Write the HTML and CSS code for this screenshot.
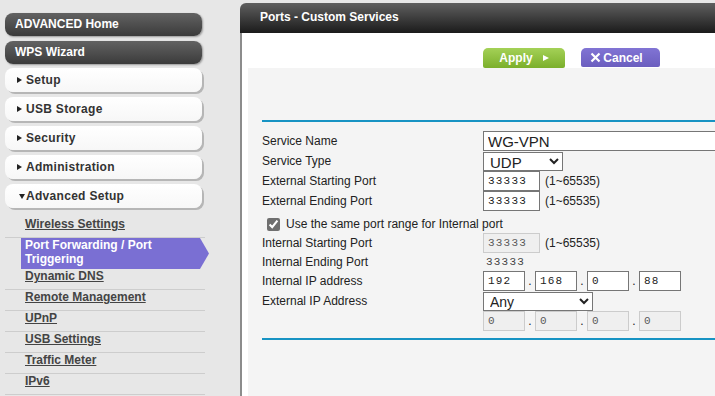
FILE: index.html
```html
<!DOCTYPE html>
<html lang="en">
<head>
    <meta charset="UTF-8">
    <title>Ports - Custom Services</title>
    <link rel="stylesheet" href="styles.css">
</head>
<body>
    <nav class="sidebar">
        <a class="nav-dark" href="#">ADVANCED Home</a>
        <a class="nav-dark" href="#">WPS Wizard</a>
        <a class="nav-btn" href="#"><span class="tri"></span>Setup</a>
        <a class="nav-btn" href="#"><span class="tri"></span>USB Storage</a>
        <a class="nav-btn" href="#"><span class="tri"></span>Security</a>
        <a class="nav-btn" href="#"><span class="tri"></span>Administration</a>
        <a class="nav-btn" href="#"><span class="tri tri-down"></span>Advanced Setup</a>
        <ul class="sub-menu">
            <li><a href="#">Wireless Settings</a></li>
            <li class="active"><a href="#">Port Forwarding / Port Triggering</a></li>
            <li><a href="#">Dynamic DNS</a></li>
            <li><a href="#">Remote Management</a></li>
            <li><a href="#">UPnP</a></li>
            <li><a href="#">USB Settings</a></li>
            <li><a href="#">Traffic Meter</a></li>
            <li><a href="#">IPv6</a></li>
        </ul>
    </nav>

    <main class="main">
        <h1 class="page-title">Ports - Custom Services</h1>
        <div class="page-body">
            <div class="button-bar">
                <button class="btn btn-apply">Apply <span class="play"></span></button>
                <button class="btn btn-cancel">
                    <svg width="11" height="11" viewBox="0 0 11 11"><path d="M1.5 1.5 L9.5 9.5 M9.5 1.5 L1.5 9.5" stroke="#fff" stroke-width="2.2" fill="none"/></svg>Cancel
                </button>
            </div>

            <div class="content">
                <div class="rule"></div>
                <form class="form">
                    <label>Service Name</label>
                    <div class="field"><input class="text-input" type="text" value="WG-VPN"></div>

                    <label>Service Type</label>
                    <div class="field">
                        <select class="select select-type"><option>UDP</option><option>TCP</option><option>TCP/UDP</option></select>
                    </div>

                    <label>External Starting Port</label>
                    <div class="field"><input class="port-input" type="text" value="33333"><span class="hint">(1~65535)</span></div>

                    <label>External Ending Port</label>
                    <div class="field"><input class="port-input" type="text" value="33333"><span class="hint">(1~65535)</span></div>

                    <div class="check-row">
                        <input type="checkbox" checked>
                        <span>Use the same port range for Internal port</span>
                    </div>

                    <label>Internal Starting Port</label>
                    <div class="field"><input class="port-input" type="text" value="33333" disabled><span class="hint">(1~65535)</span></div>

                    <label>Internal Ending Port</label>
                    <div class="field"><span class="port-value">33333</span></div>

                    <label>Internal IP address</label>
                    <div class="field">
                        <input class="ip-input" type="text" value="192"><span class="dot">.</span>
                        <input class="ip-input" type="text" value="168"><span class="dot">.</span>
                        <input class="ip-input" type="text" value="0"><span class="dot">.</span>
                        <input class="ip-input" type="text" value="88">
                    </div>

                    <label>External IP Address</label>
                    <div class="field">
                        <select class="select select-ip"><option>Any</option><option>Single address</option></select>
                    </div>

                    <span></span>
                    <div class="field">
                        <input class="ip-input" type="text" value="0" disabled><span class="dot">.</span>
                        <input class="ip-input" type="text" value="0" disabled><span class="dot">.</span>
                        <input class="ip-input" type="text" value="0" disabled><span class="dot">.</span>
                        <input class="ip-input" type="text" value="0" disabled>
                    </div>
                </form>
                <div class="rule"></div>
            </div>
        </div>
    </main>
</body>
</html>
```

FILE: styles.css
```css
body {
    margin: 0;
    background-color: #e7e7e7;
    font-family: "Liberation Sans", Arial, sans-serif;
    font-size: 12px;
    color: #222;
    display: flex;
    height: 396px;
    overflow: hidden;
}

/* left menu */
.sidebar {
    width: 240px;
    flex: none;
    padding: 13px 0 0 5px;
    box-sizing: border-box;
}

.nav-dark {
    display: block;
    width: 197px;
    height: 23px;
    line-height: 23px;
    margin-bottom: 5px;
    padding-left: 10px;
    box-sizing: border-box;
    border-radius: 8px;
    background: linear-gradient(#626262, #3b3b3b);
    box-shadow: 1px 1px 2px rgba(0, 0, 0, 0.35);
    color: #fff;
    font-weight: bold;
    text-decoration: none;
}

.nav-dark + .nav-btn {
    margin-top: -1px;
}

.nav-btn {
    display: flex;
    align-items: center;
    width: 197px;
    height: 24px;
    margin-bottom: 5px;
    padding-left: 12px;
    box-sizing: border-box;
    border-radius: 8px;
    background: linear-gradient(#fff, #f7f7f7);
    box-shadow: 2px 2px 0 #b6b6b6;
    color: #333;
    font-weight: bold;
    letter-spacing: 0.3px;
    text-decoration: none;
}

.tri {
    width: 0;
    height: 0;
    border-left: 5px solid #222;
    border-top: 3.5px solid transparent;
    border-bottom: 3.5px solid transparent;
    margin-right: 4px;
}

.tri-down {
    border-top: 5px solid #222;
    border-left: 3.5px solid transparent;
    border-right: 3.5px solid transparent;
    border-bottom: none;
    margin-left: 2px;
    margin-right: 1px;
}

.sub-menu {
    list-style: none;
    margin: 9px 0 0;
    padding: 0;
    width: 200px;
}

.sub-menu li {
    border-bottom: 1px solid #cdcdcd;
}

.sub-menu a {
    display: block;
    padding: 0 0 5px 20px;
    line-height: 15px;
    color: #444;
    font-weight: bold;
}

.sub-menu li.active {
    border-bottom: none;
    margin: 0 -4px 0 16px;
}

.sub-menu li.active a {
    padding: 1px 20px 3px 4px;
    line-height: 13.5px;
    background-color: #7a6fd3;
    color: #fff;
    text-decoration: none;
    clip-path: polygon(0 0, calc(100% - 9px) 0, 100% 50%, calc(100% - 9px) 100%, 0 100%);
}

/* main panel */
.main {
    flex: 1;
    min-width: 0;
    margin-top: 3px;
    display: flex;
    flex-direction: column;
}

.page-title {
    margin: 0;
    height: 30px;
    line-height: 29px;
    padding-left: 20px;
    border-radius: 6px 0 0 0;
    background: linear-gradient(#5f5f5f, #1b1b1b);
    color: #fff;
    font-size: 12px;
    font-weight: bold;
}

.page-body {
    flex: 1;
    background-color: #fff;
    border-left: 2px solid #8c8c8c;
    padding-left: 6px;
    display: flex;
    flex-direction: column;
}

.button-bar {
    height: 35px;
    padding: 15px 0 0 235px;
    box-sizing: border-box;
    display: flex;
    align-items: flex-start;
    gap: 16px;
}

.btn {
    height: 20px;
    border: none;
    padding: 0;
    color: #fff;
    font-family: "Liberation Sans", Arial, sans-serif;
    font-size: 12px;
    font-weight: bold;
    border-radius: 5px 5px 2px 2px;
    display: flex;
    align-items: center;
    justify-content: center;
    cursor: pointer;
}

.btn-apply {
    width: 82px;
    gap: 10px;
    background: linear-gradient(#a4d157, #7baf2b);
}

.play {
    width: 0;
    height: 0;
    border-left: 6px solid #fff;
    border-top: 3.5px solid transparent;
    border-bottom: 3.5px solid transparent;
}

.btn-cancel {
    width: 79px;
    height: 19px;
    gap: 2px;
    padding-right: 8px;
    background: linear-gradient(#8174d4, #6b5ebf);
}

.content {
    flex: 1;
    background-color: #f4f4f4;
    padding: 52px 0 0 14px;
}

.rule {
    height: 2px;
    background-color: #1793c3;
}

.form {
    display: grid;
    grid-template-columns: 221px auto;
    grid-template-rows: repeat(4, 20px) 22px 20px 18px repeat(3, 20px);
    align-items: center;
    margin: 9px 0 7px;
}

.field {
    display: flex;
    align-items: center;
}

.text-input,
.port-input,
.ip-input {
    height: 20px;
    border: 1px solid #767676;
    border-radius: 0;
    padding: 0 4px;
    box-sizing: border-box;
    background-color: #fff;
    color: #222;
}

.text-input {
    width: 260px;
    font: 15px "Liberation Sans", Arial, sans-serif;
}

.port-input,
.ip-input,
.port-value {
    font-family: "Liberation Mono", "Courier New", monospace;
    font-size: 11px;
    letter-spacing: 1.2px;
}

.port-input {
    width: 57px;
}

.ip-input {
    width: 42px;
}

.port-input:disabled,
.ip-input:disabled {
    background-color: #efefef;
    border-color: #cccccc;
    color: #5a5a5a;
}

.port-value {
    padding-left: 3px;
    color: #444;
}

.hint {
    margin-left: 5px;
}

.dot {
    width: 10px;
    text-align: center;
}

.select {
    height: 19px;
    border: 1px solid #767676;
    border-radius: 0;
    background-color: #fff;
    color: #222;
    font: 15px "Liberation Sans", Arial, sans-serif;
    padding: 0 2px;
}

.select-type {
    width: 80px;
}

.select-ip {
    width: 110px;
    font-size: 14px;
}

.check-row {
    grid-column: 1 / -1;
    display: flex;
    align-items: center;
    padding: 4px 0 0 5px;
}

.check-row input {
    width: 13px;
    height: 13px;
    margin: 0 6px 0 0;
    accent-color: #6f6f6f;
}
```
